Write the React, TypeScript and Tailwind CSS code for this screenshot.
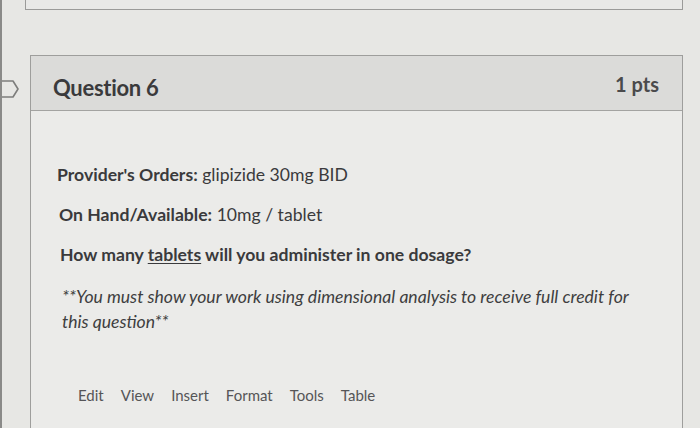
import React from "react";

export default function App() {
  return (
    <div
      className="relative w-[700px] h-[428px] overflow-hidden bg-[#e7e7e4] border-l-2 border-[#8a8a88]"
      style={{ fontFamily: "Lato, 'Noto Sans', sans-serif" }}
    >
      {/* previous question card bottom */}
      <div className="ml-[23px] mr-[17px] h-[10px] border border-t-0 border-[#9b9b99] bg-[#e9e9e7]" />

      {/* bookmark flag */}
      <svg className="absolute left-0 top-[79px]" width="18" height="20" viewBox="0 0 18 20">
        <path d="M-2 2 H11 L16 10 L11 18 H-2" fill="none" stroke="#7d7d7b" strokeWidth="1.6" strokeLinejoin="round" />
      </svg>

      {/* question card */}
      <div className="mt-[45px] ml-[28px] mr-[17px] h-[400px] border border-[#9e9e9c] bg-[#ebebe9]">
        <div className="h-[55px] bg-[#dbdbd9] border-b border-[#a3a3a1] flex items-center justify-between pl-[22px] pr-[23px]">
          <span className="mt-[9px] text-[22px] font-bold text-[#3a3a3c] tracking-[-0.3px]">Question 6</span>
          <span className="mt-[2px] text-[20px] font-bold text-[#4a4a4c]">1 pts</span>
        </div>
        <div className="pl-[26px] pt-[52px] text-[17.6px] text-[#3a3a3c]">
          <p className="leading-[24px]">
            <span className="font-bold">Provider's Orders:</span> glipizide 30mg BID
          </p>
          <p className="leading-[24px] mt-[16px] pl-[2px]">
            <span className="font-bold">On Hand/Available:</span> 10mg / tablet
          </p>
          <p className="leading-[24px] mt-[16px] pl-[3px] font-bold">
            How many <span className="underline underline-offset-2">tablets</span> will you administer in one dosage?
          </p>
          <p className="mt-[17px] pl-[5px] pr-[40px] italic text-[17.6px] leading-[25px] text-[#3e3e40]">
            **You must show your work using dimensional analysis to receive full credit for this question**
          </p>
          <div className="mt-[50px] pl-[21px] flex gap-[17px] text-[15px] text-[#555557]">
            <span>Edit</span>
            <span>View</span>
            <span>Insert</span>
            <span>Format</span>
            <span>Tools</span>
            <span>Table</span>
          </div>
        </div>
      </div>
    </div>
  );
}
